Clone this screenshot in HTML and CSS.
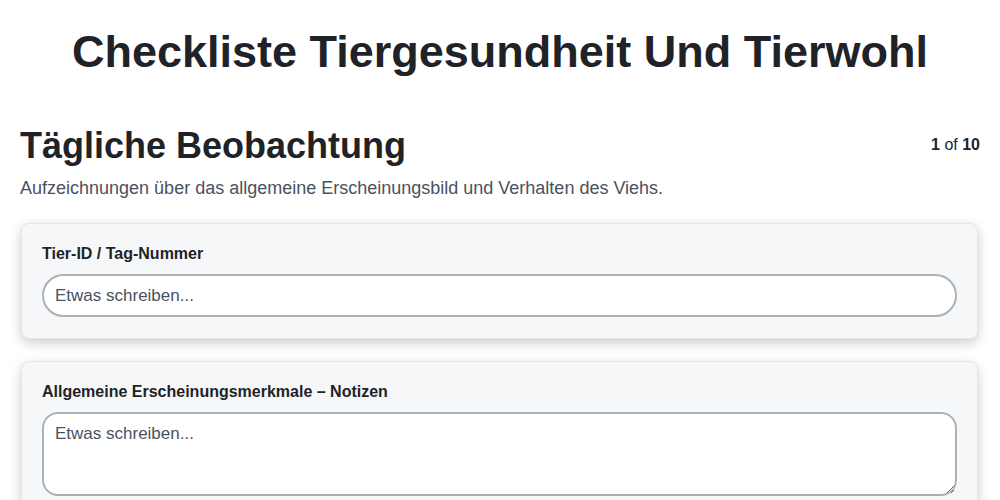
FILE: index.html
```html
<!DOCTYPE html>
<html lang="de">

<head>
    <meta charset="UTF-8">
    <meta name="viewport" content="width=device-width, initial-scale=1.0">
    <title>Checkliste Tiergesundheit Und Tierwohl</title>
    <link rel="stylesheet" href="styles.css">
</head>

<body>
    <h1 class="page-title">Checkliste Tiergesundheit Und Tierwohl</h1>

    <div class="section">
        <div class="section-header">
            <h2>Tägliche Beobachtung</h2>
            <div class="pager"><b>1</b> of <b>10</b></div>
        </div>
        <p class="section-desc">Aufzeichnungen über das allgemeine Erscheinungsbild und Verhalten des Viehs.</p>

        <div class="card">
            <label class="field-label" for="tag">Tier-ID / Tag-Nummer</label>
            <input type="text" id="tag" class="text-input" placeholder="Etwas schreiben...">
        </div>

        <div class="card">
            <label class="field-label" for="notes">Allgemeine Erscheinungsmerkmale – Notizen</label>
            <textarea id="notes" class="text-area" placeholder="Etwas schreiben..."></textarea>
        </div>
    </div>
</body>

</html>
```

FILE: styles.css
```css
body {
    margin: 0;
    padding: 0 20px;
    font-family: "Liberation Sans", Arial, sans-serif;
    color: #1f2328;
    background: #fff;
}

.page-title {
    margin: 0;
    padding-top: 24px;
    font-size: 45px;
    line-height: 56px;
    text-align: center;
    font-weight: bold;
}

.section {
    margin-top: 45px;
}

.section-header {
    display: flex;
    justify-content: space-between;
    align-items: flex-start;
}

.section-header h2 {
    margin: 0;
    font-size: 36px;
    line-height: 42px;
}

.pager {
    font-size: 16px;
    padding-top: 11px;
    color: #1f2328;
}

.section-desc {
    margin: 11px 0 24px;
    font-size: 18px;
    color: #4b5260;
}

.card {
    margin: 0 2px 22px 1px;
    padding: 21px 20px 21px;
    background: #f6f7f9;
    border: 1px solid #e3e6ea;
    border-radius: 8px;
    box-shadow: 0 4px 12px rgba(0, 0, 0, 0.2);
}

.field-label {
    display: block;
    font-size: 16px;
    font-weight: bold;
    margin-bottom: 11px;
}

.text-input,
.text-area {
    display: block;
    width: 100%;
    box-sizing: border-box;
    font-family: inherit;
    font-size: 17px;
    color: #1f2328;
    background: #fff;
    border: 2px solid #aab1b9;
    padding: 0 11px;
}

.text-input {
    height: 43px;
    border-radius: 22px;
}

.text-area {
    height: 84px;
    padding-top: 10px;
    border-radius: 16px;
    resize: vertical;
}

.text-input::placeholder,
.text-area::placeholder {
    color: #4b5260;
}
```
